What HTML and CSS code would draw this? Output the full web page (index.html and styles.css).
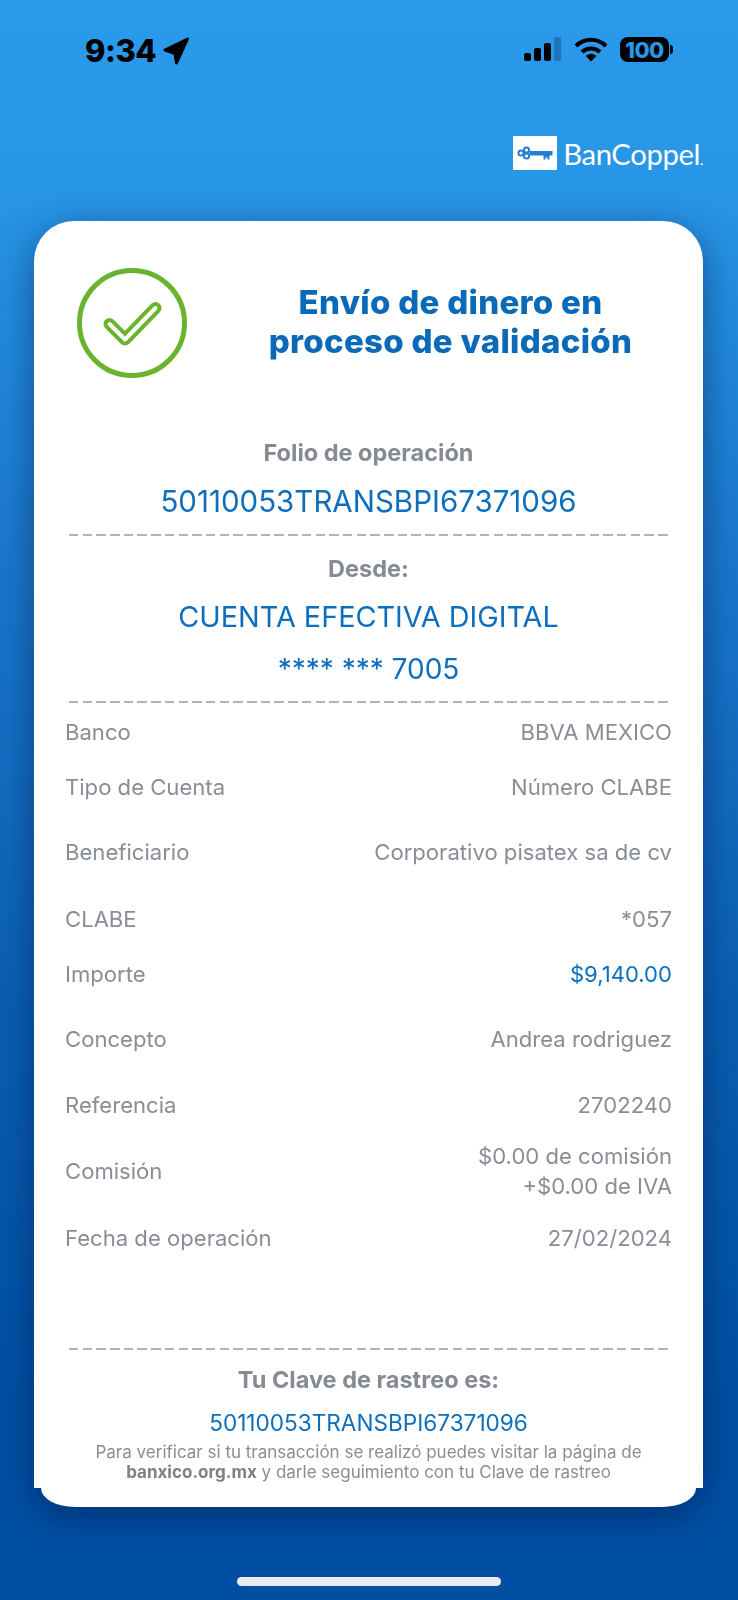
FILE: index.html
```html
<!DOCTYPE html>
<html>
<head>
  <title>BanCoppel - Envío de dinero</title>
  <link rel="stylesheet" href="styles.css">
</head>
<body>
  <div class="screen">
    <!-- Status bar -->
    <div class="status-bar">
      <div class="status-left">
        <span class="time">9:34</span>
        <svg class="location" width="28" height="30" viewBox="0 0 28 30"><path d="M25.500 3 3 14l10 3.500L14.500 27z"/></svg>
      </div>
      <div class="status-right">
        <svg width="38" height="25" viewBox="0 0 38 25">
          <rect x="0" y="16" width="7" height="8" rx="2"/>
          <rect x="10" y="11" width="7" height="13" rx="2"/>
          <rect x="20" y="6" width="7" height="18" rx="2"/>
          <rect x="30" y="0" width="7" height="24" rx="2" class="bar-off"/>
        </svg>
        <svg class="wifi" width="34" height="25" viewBox="0 0 34 25">
          <path d="M2 9a21 21 0 0 1 30 0" class="arc"/>
          <path d="M8 15a13 13 0 0 1 18 0" class="arc"/>
          <path d="M17 24.500 11.700 19a7.500 7.500 0 0 1 10.600 0z"/>
        </svg>
        <div class="battery"><span class="battery-level">100</span></div>
      </div>
    </div>

    <!-- Logo -->
    <div class="brand">
      <div class="brand-mark">
        <svg width="36" height="14" viewBox="0 0 36 14">
          <circle cx="4" cy="7" r="2.600" class="key-ring"/>
          <circle cx="9.500" cy="4" r="2.600" class="key-ring"/>
          <circle cx="9.500" cy="10" r="2.600" class="key-ring"/>
          <path d="M12.500 5h23v4.500h-3v4h-2v-2h-2v2h-2v-4h-14z"/>
        </svg>
      </div>
      <span class="brand-name">BanCoppel<small>.</small></span>
    </div>

    <!-- Receipt -->
    <div class="receipt">
      <div class="receipt-body">
        <div class="receipt-head">
          <svg class="check" width="110" height="110" viewBox="0 0 110 110">
            <circle cx="55" cy="55" r="52.500" class="check-ring"/>
            <path d="M32.500 56 48 71.500 78.500 40" class="check-outer"/>
            <path d="M32.500 56 48 71.500 78.500 40" class="check-inner"/>
          </svg>
          <h1 class="title">Envío de dinero en<br>proceso de validación</h1>
        </div>

        <div class="block block-folio">
          <p class="label">Folio de operación</p>
          <p class="big-value">50110053TRANSBPI67371096</p>
        </div>
        <div class="dash"></div>

        <div class="block block-from">
          <p class="label">Desde:</p>
          <p class="big-value account">CUENTA EFECTIVA DIGITAL</p>
          <p class="big-value masked">**** *** 7005</p>
        </div>
        <div class="dash"></div>

        <div class="rows">
          <div class="row gap-s"><span>Banco</span><span>BBVA MEXICO</span></div>
          <div class="row gap-m"><span>Tipo de Cuenta</span><span>Número CLABE</span></div>
          <div class="row gap-l"><span>Beneficiario</span><span>Corporativo pisatex sa de cv</span></div>
          <div class="row gap-s"><span>CLABE</span><span>*057</span></div>
          <div class="row gap-m"><span>Importe</span><span class="amount">$9,140.00</span></div>
          <div class="row gap-l"><span>Concepto</span><span>Andrea rodriguez</span></div>
          <div class="row gap-n"><span>Referencia</span><span>2702240</span></div>
          <div class="row gap-l"><span>Comisión</span><span>$0.00 de comisión<br>+$0.00 de IVA</span></div>
          <div class="row"><span>Fecha de operación</span><span>27/02/2024</span></div>
        </div>
        <div class="dash"></div>

        <div class="block block-track">
          <p class="label">Tu Clave de rastreo es:</p>
          <p class="track-value">50110053TRANSBPI67371096</p>
          <p class="note">Para verificar si tu transacción se realizó puedes visitar la página de<br><strong>banxico.org.mx</strong> y darle seguimiento con tu Clave de rastreo</p>
        </div>
      </div>
      <div class="receipt-foot"></div>
    </div>

    <div class="home-bar"></div>
  </div>
</body>
</html>
```

FILE: styles.css
```css
body {
  margin: 0;
  font-family: Inter, 'Liberation Sans', sans-serif;
}

p, h1 {
  margin: 0;
}

.screen {
  height: 1600px;
  display: flex;
  flex-direction: column;
  overflow: hidden;
  background: linear-gradient(#2a9aea 0, #2896e6 180px, #1a78cc 560px, #0a5fb2 1000px, #004fa3 1400px);
}

/* Status bar */
.status-bar {
  height: 100px;
  padding: 36px 69px 0 85px;
  box-sizing: border-box;
  display: flex;
  justify-content: space-between;
  align-items: flex-start;
}

.status-left, .status-right {
  display: flex;
  align-items: center;
}

.time {
  font-size: 31px;
  font-weight: 800;
  line-height: 30px;
  color: #000;
  letter-spacing: -0.5px;
}

.location {
  margin-left: 6px;
  stroke: #000;
  stroke-width: 3;
  stroke-linejoin: round;
}

.status-right {
  gap: 12px;
  padding-top: 1px;
}

.bar-off {
  fill: #1f74b8;
}

.arc {
  fill: none;
  stroke: #000;
  stroke-width: 4;
}

.battery {
  position: relative;
  width: 49px;
  height: 25px;
  background-color: #000;
  border-radius: 8px;
  display: flex;
  align-items: center;
  justify-content: center;
}

.battery::after {
  content: "";
  position: absolute;
  right: -4px;
  top: 8px;
  width: 3px;
  height: 9px;
  background-color: #000;
  border-radius: 0 3px 3px 0;
}

.battery-level {
  font-size: 22px;
  font-weight: 800;
  color: #2898e8;
  letter-spacing: -0.5px;
}

/* Logo */
.brand {
  height: 34px;
  margin-top: 36px;
  padding-right: 35px;
  display: flex;
  justify-content: flex-end;
  align-items: center;
}

.brand-mark {
  width: 44px;
  height: 34px;
  background-color: #fff;
  display: flex;
  align-items: center;
  justify-content: center;
}

.brand-mark svg {
  fill: #2280d0;
}

.key-ring {
  fill: none;
  stroke: #2280d0;
  stroke-width: 2;
}

.brand-name {
  margin-left: 6px;
  font-family: Lato, sans-serif;
  font-size: 29.300px;
  font-weight: 400;
  color: #fff;
  letter-spacing: -0.4px;
}

.brand-name small {
  font-size: 14px;
}

/* Receipt card */
.receipt {
  margin: 51px 35px 0 34px;
  filter: drop-shadow(0 10px 18px rgba(0, 20, 70, 0.5));
}

.receipt-body {
  height: 1267px;
  padding: 0 31px;
  box-sizing: border-box;
  background-color: #fff;
  border-radius: 40px 40px 0 0;
}

.receipt-foot {
  height: 19px;
  margin: 0 7px;
  background-color: #fff;
  border-radius: 0 0 34px 34px / 0 0 19px 19px;
}

.receipt-head {
  height: 188px;
  padding-left: 12px;
  display: flex;
  align-items: center;
}

.check {
  flex: none;
  margin-top: 16px;
}

.check-ring {
  fill: none;
  stroke: #69b42e;
  stroke-width: 5;
}

.check-outer, .check-inner {
  fill: none;
  stroke-linecap: round;
  stroke-linejoin: round;
}

.check-outer {
  stroke: #69b42e;
  stroke-width: 12;
}

.check-inner {
  stroke: #fff;
  stroke-width: 4;
}

.title {
  flex: 1;
  margin-top: 14px;
  padding-left: 42px;
  text-align: center;
  font-size: 33px;
  font-weight: 800;
  line-height: 39px;
  color: #0a6ab8;
  letter-spacing: 0.3px;
  white-space: nowrap;
}

.block {
  text-align: center;
}

.label {
  font-size: 23.500px;
  font-weight: 700;
  color: #858a93;
}

.big-value {
  font-size: 29.500px;
  color: #0d6ebd;
}

.block-folio {
  padding-top: 29px;
}

.block-folio .big-value {
  margin-top: 16px;
}

.dash {
  height: 2px;
  margin: 0 2px 0 4px;
  background: repeating-linear-gradient(90deg, #b0b3b8 0, #b0b3b8 9.500px, transparent 9.500px, transparent 13.700px);
}

.block-folio + .dash {
  margin-top: 15px;
}

.block-from {
  padding-top: 17.500px;
}

.account {
  margin-top: 16px;
  font-size: 28.800px;
}

.masked {
  margin-top: 18px;
  font-size: 28px;
}

.block-from + .dash {
  margin-top: 15.500px;
}

/* Detail rows */
.rows {
  height: 645px;
  padding-top: 14px;
  box-sizing: border-box;
}

.row {
  height: 30px;
  display: flex;
  justify-content: space-between;
  align-items: center;
  font-size: 22.100px;
  line-height: 30px;
  color: #888d96;
}

.row span:last-child {
  text-align: right;
}

.gap-s {
  margin-bottom: 25px;
}

.gap-m {
  margin-bottom: 35px;
}

.gap-n {
  margin-bottom: 36px;
}

.gap-l {
  margin-bottom: 36.500px;
}

.amount {
  color: #0d6ebd;
}

/* Tracking key */
.block-track {
  padding-top: 15px;
}

.track-value {
  margin-top: 14.500px;
  font-size: 22.600px;
  color: #0d6ebd;
}

.note {
  margin-top: 6px;
  font-size: 17px;
  line-height: 20px;
  color: #8b8d92;
}

.note strong {
  color: #7d8087;
}

.home-bar {
  width: 264px;
  height: 9px;
  margin: 70px auto 0;
  background-color: #ebebed;
  border-radius: 5px;
}
```
